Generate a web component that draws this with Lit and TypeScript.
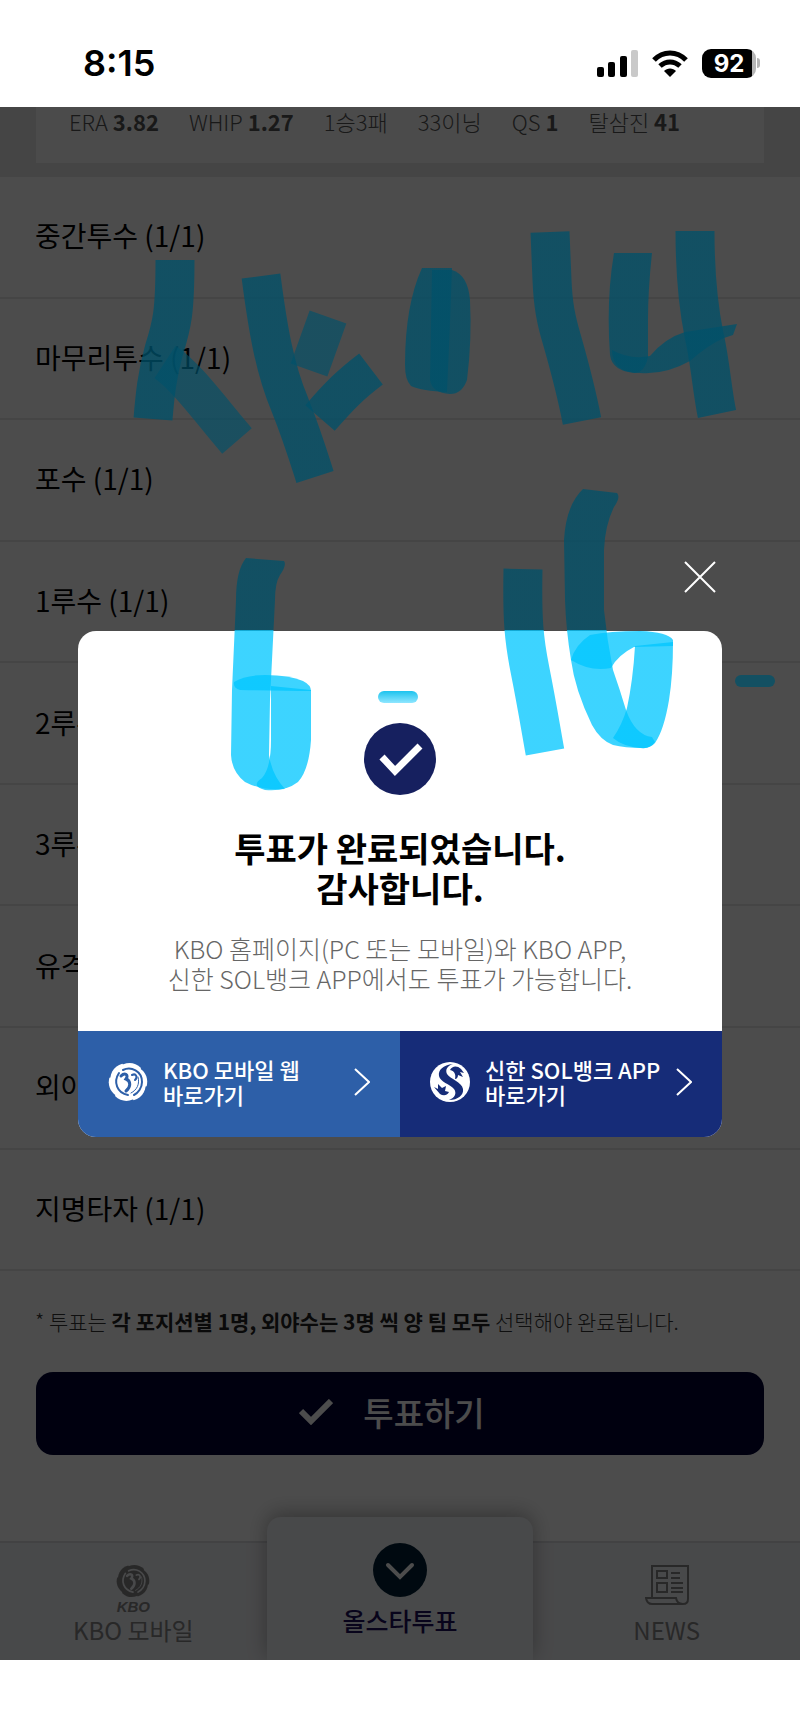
import { LitElement, html, svg, css, nothing } from 'lit';
import { customElement, property } from 'lit/decorators.js';

interface Stat {
  label: string;
  value?: string;
}

interface Position {
  name: string;
  picked: number;
  total: number;
}

const STATS: Stat[] = [
  { label: 'ERA', value: '3.82' },
  { label: 'WHIP', value: '1.27' },
  { label: '1승3패' },
  { label: '33이닝' },
  { label: 'QS', value: '1' },
  { label: '탈삼진', value: '41' },
];

const POSITIONS: Position[] = [
  { name: '중간투수', picked: 1, total: 1 },
  { name: '마무리투수', picked: 1, total: 1 },
  { name: '포수', picked: 1, total: 1 },
  { name: '1루수', picked: 1, total: 1 },
  { name: '2루수', picked: 1, total: 1 },
  { name: '3루수', picked: 1, total: 1 },
  { name: '유격수', picked: 1, total: 1 },
  { name: '외야수', picked: 3, total: 3 },
  { name: '지명타자', picked: 1, total: 1 },
];

// one feather tip on the rim of the emblem
const feather = (angle: number) => svg`
  <path transform="rotate(${angle} 20 20)" d="M10 6 C16 0 26 -1 33 6 L31 11 L14 12Z"/>`;

const kboMark = html`
  <svg class="mark" viewBox="0 0 40 40" aria-hidden="true">
    <mask id="swirl">
      <g fill="#fff">
        <circle cx="20" cy="20" r="17"/>
        ${[0, 60, 120, 180, 240, 300].map(feather)}
      </g>
      <g fill="none" stroke="#000" stroke-linecap="round">
        <path d="M11 11 C5 20 9 31 20 33" stroke-width="2"/>
        <path d="M15 8 C23 4 34 9 34 20 C34 26 30 31 26 33" stroke-width="2"/>
        <path d="M13 14 C17 10 21 13 18 17 C23 19 23 25 18 29" stroke-width="3"/>
        <path d="M24 13 C28 11 30 15 27 18" stroke-width="2"/>
        <path d="M30 15 C32 22 29 28 23 31" stroke-width="1"/>
      </g>
    </mask>
    <rect width="40" height="40" fill="currentColor" mask="url(#swirl)"/>
  </svg>
`;

const solMark = html`
  <svg class="mark" viewBox="0 0 40 40" aria-hidden="true">
    <circle cx="20" cy="20" r="20" fill="#fff"/>
    <g fill="#162c78">
      <path d="M23 2 C13 3 8 8 9 14 C10 20 20 22 24 27 C27 31 25 36 19 38 C28 38 34 33 33 27 C32 20 20 17 17 12 C15 8 17 4 23 2Z"/>
      <path d="M20 8 C22 4 27 3 31 7 L34 11 L30 10 L33 15 L28 13 C28 15 27 17 25 17 C26 13 25 9 20 8Z"/>
      <path d="M4 25 L8 27 L8 22 L12 26 L16 24 L15 29 L19 30 C17 34 13 34 10 32Z"/>
    </g>
  </svg>
`;

const chevron = html`
  <svg class="chevron" viewBox="0 0 16 28" fill="none" stroke="#fff" stroke-width="2" aria-hidden="true">
    <path d="M1 1 L15 14 L1 27"/>
  </svg>
`;

/**
 * Phone status bar: clock, signal, wifi and battery.
 *
 * @element status-bar
 */
@customElement('status-bar')
export class StatusBar extends LitElement {
  @property({ type: String })
  time = '';

  @property({ type: Number })
  battery = 100;

  static styles = css`
    :host {
      display: flex;
      justify-content: space-between;
      align-items: center;
      box-sizing: border-box;
      height: 107px;
      padding: 19px 40px 0 83px;
      background: #fff;
      color: #000;
      font-family: Inter, "Liberation Sans", sans-serif;
      font-weight: 600;
    }

    .time {
      font-size: 36px;
    }

    .icons {
      display: flex;
      align-items: center;
      gap: 14px;
    }

    .signal {
      width: 41px;
      height: 27px;
    }

    .wifi {
      width: 36px;
      height: 27px;
    }

    .battery {
      display: flex;
      align-items: center;
      gap: 1px;
    }

    .level {
      width: 54px;
      border-radius: 9px;
      background: linear-gradient(90deg, #000 92%, #b5b5b5 92%);
      color: #fff;
      font-size: 24px;
      font-weight: 700;
      line-height: 29px;
      text-align: center;
    }

    .cap {
      width: 3px;
      height: 10px;
      border-radius: 0 3px 3px 0;
      background: #b5b5b5;
    }
  `;

  render() {
    return html`
      <span class="time">${this.time}</span>
      <div class="icons">
        <svg class="signal" viewBox="0 0 41 27" aria-hidden="true">
          <rect x="0" y="17" width="7" height="10" rx="2"/>
          <rect x="11" y="12" width="7" height="15" rx="2"/>
          <rect x="23" y="6" width="7" height="21" rx="2"/>
          <rect x="34" y="0" width="7" height="27" rx="2" fill="#c9c9c9"/>
        </svg>
        <svg class="wifi" viewBox="0 0 36 27" fill="none" stroke="#000" stroke-width="5" aria-hidden="true">
          <path d="M2 10 C11 0.500 25 0.500 34 10"/>
          <path d="M8 16 C14 10.500 22 10.500 28 16"/>
          <path d="M18 27 L12 21 C15 17.500 21 17.500 24 21Z" fill="#000" stroke="none"/>
        </svg>
        <div class="battery">
          <span class="level">${this.battery}</span>
          <span class="cap"></span>
        </div>
      </div>
    `;
  }
}

/**
 * Popup shown once the ballot has been sent.
 *
 * @element vote-dialog
 */
@customElement('vote-dialog')
export class VoteDialog extends LitElement {
  static styles = css`
    :host {
      display: block;
      position: relative;
    }

    .dialog {
      border-radius: 18px;
      overflow: hidden;
      background: #fff;
      text-align: center;
    }

    .close {
      position: absolute;
      right: 0;
      bottom: 100%;
      width: 44px;
      height: 44px;
      margin-bottom: 32px;
      padding: 0;
      border: 0;
      background: none;
    }

    .close svg {
      width: 32px;
      height: 32px;
      display: block;
      margin: auto;
    }

    .body {
      display: flex;
      flex-direction: column;
      align-items: center;
      padding: 92px 24px 38px;
    }

    .badge {
      width: 72px;
      height: 72px;
    }

    h1 {
      margin: 33px 0 25px;
      color: #000;
      font-size: 34px;
      font-weight: 700;
      line-height: 40px;
    }

    p {
      margin: 0;
      color: #666;
      font-size: 25px;
      font-weight: 300;
      line-height: 30px;
    }

    .links {
      display: grid;
      grid-template-columns: 1fr 1fr;
    }

    .link {
      display: flex;
      align-items: center;
      gap: 15px;
      height: 106px;
      padding: 0 30px 4px;
      box-sizing: border-box;
      background: #2d5fa8;
      color: #fff;
      font-size: 22px;
      font-weight: 500;
      line-height: 25px;
      text-align: left;
      text-decoration: none;
      white-space: nowrap;
    }

    .link.sol {
      background: #162c78;
    }

    .link span {
      flex: 1;
    }

    .mark {
      width: 40px;
      height: 40px;
      flex: none;
    }

    .chevron {
      width: 16px;
      height: 28px;
      flex: none;
    }
  `;

  render() {
    return html`
      <button class="close" aria-label="닫기">
        <svg viewBox="0 0 32 32" stroke="#fff" stroke-width="2" aria-hidden="true">
          <path d="M1 1 L31 31 M31 1 L1 31"/>
        </svg>
      </button>
      <div class="dialog" role="dialog" aria-labelledby="title">
        <div class="body">
          <svg class="badge" viewBox="0 0 72 72" aria-hidden="true">
            <circle cx="36" cy="36" r="36" fill="#16205f"/>
            <path d="M18 34 L31 48 L56 23" fill="none" stroke="#fff" stroke-width="7"/>
          </svg>
          <h1 id="title">투표가 완료되었습니다.<br>감사합니다.</h1>
          <p>KBO 홈페이지(PC 또는 모바일)와 KBO APP,<br>신한 SOL뱅크 APP에서도 투표가 가능합니다.</p>
        </div>
        <div class="links">
          <a class="link" href="#kbo">${kboMark}<span>KBO 모바일 웹<br>바로가기</span>${chevron}</a>
          <a class="link sol" href="#sol">${solMark}<span>신한 SOL뱅크 APP<br>바로가기</span>${chevron}</a>
        </div>
      </div>
    `;
  }
}

/**
 * Highlighter strokes drawn by hand over the whole screen.
 * The ink is deep over the dimmed page and bright over the popup.
 *
 * @element ink-layer
 */
@customElement('ink-layer')
export class InkLayer extends LitElement {
  static styles = css`
    :host {
      display: block;
      pointer-events: none;
    }

    svg {
      display: block;
      width: 100%;
      height: 100%;
    }

    .line {
      fill: none;
      stroke: url(#ink);
      stroke-width: 39;
      stroke-opacity: 0.76;
    }

    .shape {
      fill: url(#ink);
      fill-opacity: 0.76;
    }

    .soft {
      stroke-opacity: 0.65;
    }

    .deep {
      fill: #00516a;
      fill-opacity: 0.75;
    }
  `;

  render() {
    return html`
      <svg viewBox="0 0 800 1733" aria-hidden="true">
        <defs>
          <linearGradient id="ink" gradientUnits="userSpaceOnUse" x1="0" y1="0" x2="0" y2="1000">
            <stop offset="0.6305" stop-color="#00516a"/>
            <stop offset="0.6305" stop-color="#00c6ff"/>
          </linearGradient>
          <linearGradient id="fade" x1="0" y1="0" x2="0" y2="1">
            <stop offset="0" stop-color="#1cc3ee"/>
            <stop offset="1" stop-color="#8fe6ff"/>
          </linearGradient>
        </defs>
        <path class="line" d="M175 260 C175 312 172 325 164 350 C157 375 155 395 153 419"/>
        <path class="line soft" d="M165 362 C185 375 212 412 237 441"/>
        <path class="line" d="M261 276 C268 330 275 370 290 405 C302 435 308 455 315 477"/>
        <path class="line soft" d="M328 317 L309 370"/>
        <path class="line" d="M371 369 C350 385 340 395 320 418"/>
        <path class="shape" d="M422 268 L452 268 Q450 330 447 392 Q422 391 411 386 Q405 380 405 365 Q405 305 422 268Z"/>
        <path class="shape" d="M432 270 L452 270 Q468 275 470 300 Q472 340 467 380 Q462 394 450 394 Q432 393 430 380Z"/>
        <path class="line" d="M550 232 L552 280 C553 305 556 320 562 340 C570 368 577 395 582 421"/>
        <path class="shape" d="M614 253 L652 253 Q648 290 648 320 L648 357 Q645 372 635 373 Q612 371 610 355 Q606 300 614 253Z"/>
        <path class="shape" d="M612 350 Q630 360 650 356 Q665 338 685 332 L737 324 L733 335 L724 338 Q708 345 690 361 Q665 375 640 373 Q612 373 612 350Z"/>
        <path class="line" d="M695 231 C695 280 699 310 704 335 C710 360 712 390 717 414"/>
        <path class="line" d="M523 569 C522 620 524 640 530 670 C537 705 541 730 545 752"/>
        <path class="shape" d="M246 558 L284 561 Q287 565 280 575 Q275 583 275 600 L270 700 L269 755 Q272 775 285 789 Q262 791 245 782 Q232 772 231 755 L232 690 L236 600 Q236 570 246 558Z"/>
        <path class="shape" d="M271 686 L311 690 V740 Q309 770 298 782 Q285 792 265 790 Q250 786 262 778 Q271 768 271 740Z"/>
        <path class="shape" d="M234 682 Q245 675 265 675 Q290 675 303 681 Q311 685 311 691 Q285 691 240 690 Q233 688 234 682Z"/>
        <path class="shape" d="M583 489 L617 493 Q621 497 614 507 Q605 525 604 550 L604 610 Q607 640 613 670 Q620 690 626 710 Q635 735 652 737 L655 742 Q650 749 642 748 Q625 748 613 745 Q600 740 592 725 Q575 690 571 660 Q566 630 565 600 L564 540 Q566 505 583 489Z"/>
        <path class="shape" d="M635 646 L673 642 Q673 675 669 700 Q664 730 655 743 Q650 749 640 748 Q622 746 613 738 Q622 725 627 708 Q633 680 635 646Z"/>
        <path class="shape" d="M571 660 Q575 645 590 635 Q610 631 640 631 Q668 632 673 640 V646 L634 647 Q618 655 611 668 Q590 672 571 660Z"/>
        <rect x="378" y="691" width="40" height="12" rx="6" fill="url(#fade)"/>
        <rect class="deep" x="735" y="675" width="40" height="12" rx="6"/>
      </svg>
    `;
  }
}

/**
 * All-star ballot page with the vote confirmation open on top.
 *
 * @element app-root
 */
@customElement('app-root')
export class AppRoot extends LitElement {
  static styles = css`
    :host {
      display: flex;
      flex-direction: column;
      position: relative;
      min-height: 100vh;
      background: #fff;
      font-family: "Noto Sans CJK KR", "Noto Sans", sans-serif;
    }

    .screen {
      flex: 1;
      display: flex;
      flex-direction: column;
      position: relative;
    }

    .player {
      padding: 0 36px 14px;
      background: #e6e6e6;
    }

    .stats {
      display: flex;
      gap: 30px;
      margin: 0;
      padding: 0 33px 28px;
      background: #fbfbfb;
      color: #555;
      font-size: 22px;
      font-weight: 300;
      line-height: 28px;
      white-space: nowrap;
    }

    .stats li {
      list-style: none;
    }

    b {
      font-weight: 700;
    }

    .positions {
      flex: 1;
      display: flex;
      flex-direction: column;
      margin: 0;
      padding: 0;
    }

    .position {
      flex: 1;
      display: flex;
      align-items: center;
      padding: 0 35px 3px;
      border-bottom: 2px solid #e6e6e6;
      color: #000;
      font-size: 28px;
      list-style: none;
    }

    .note {
      margin: 0;
      padding: 35px 35px 36px;
      color: #333;
      font-size: 21px;
      font-weight: 300;
      line-height: 30px;
      white-space: nowrap;
    }

    .note b {
      color: #222;
    }

    .vote {
      display: flex;
      align-items: center;
      justify-content: center;
      gap: 30px;
      height: 83px;
      margin: 0 36px 86px;
      padding: 0 16px 4px 0;
      border: 0;
      border-radius: 17px;
      background: #000335;
      color: #fff;
      font-family: inherit;
      font-size: 33px;
      font-weight: 500;
    }

    .vote svg {
      width: 34px;
      height: 26px;
    }

    .tabs {
      display: grid;
      grid-template-columns: repeat(3, 1fr);
      height: 119px;
      background: #f2f3f7;
      box-shadow: inset 0 2px #dcdde2;
    }

    .tab {
      display: flex;
      flex-direction: column;
      align-items: center;
      padding-top: 23px;
      color: #888;
      font-size: 24px;
      line-height: 30px;
      text-decoration: none;
    }

    .tab .mark {
      width: 34px;
      height: 34px;
    }

    .brand {
      font-family: "Liberation Sans", sans-serif;
      font-size: 15px;
      font-style: italic;
      font-weight: 700;
      line-height: 17px;
    }

    .news {
      width: 44px;
      height: 42px;
      margin-bottom: 9px;
    }

    .tab.active {
      margin-top: -24px;
      padding-top: 26px;
      border-radius: 14px 14px 0 0;
      background: #f2f3f7;
      box-shadow: 0 -4px 20px rgba(0, 0, 0, 0.3);
      clip-path: inset(-40px -40px 0);
      color: #1b0f5c;
      font-size: 25px;
      font-weight: 500;
    }

    .active svg {
      width: 54px;
      height: 54px;
      margin-bottom: 8px;
    }

    .dim,
    .popup {
      position: absolute;
      inset: 0;
    }

    .dim {
      background: rgba(0, 0, 0, 0.7);
    }

    .popup {
      display: flex;
      align-items: center;
      justify-content: center;
    }

    vote-dialog {
      width: 80.5%;
    }

    ink-layer {
      position: absolute;
      inset: 0;
    }

    .home {
      height: 73px;
    }
  `;

  private renderStat(stat: Stat) {
    return html`<li>${stat.label}${stat.value ? html` <b>${stat.value}</b>` : nothing}</li>`;
  }

  private renderPosition(position: Position) {
    return html`<li class="position">${position.name} (${position.picked}/${position.total})</li>`;
  }

  render() {
    return html`
      <status-bar time="8:15" battery="92"></status-bar>
      <main class="screen">
        <div class="player">
          <ul class="stats">${STATS.map(this.renderStat)}</ul>
        </div>
        <ul class="positions">${POSITIONS.map(this.renderPosition)}</ul>
        <p class="note">
          * 투표는 <b>각 포지션별 1명, 외야수는 3명 씩 양 팀 모두</b> 선택해야 완료됩니다.
        </p>
        <button class="vote">
          <svg viewBox="0 0 34 26" fill="none" stroke="currentColor" stroke-width="6" aria-hidden="true">
            <path d="M2 12 L12 22 L32 2"/>
          </svg>
          투표하기
        </button>
        <nav class="tabs">
          <a class="tab" href="#kbo">
            ${kboMark}
            <span class="brand">KBO</span>
            <span>KBO 모바일</span>
          </a>
          <a class="tab active" href="#vote">
            <svg viewBox="0 0 54 54" aria-hidden="true">
              <circle cx="27" cy="27" r="27" fill="#002136"/>
              <path d="M15 22 L27 34 L39 22" fill="none" stroke="#fff" stroke-width="4" stroke-linecap="round"/>
            </svg>
            <span>올스타투표</span>
          </a>
          <a class="tab" href="#news">
            <svg class="news" viewBox="0 0 44 42" fill="none" stroke="currentColor" stroke-width="2" aria-hidden="true">
              <path d="M7 34 V2 H43 V35 Q43 40 38 40 H7 Q2 40 1 34 H31 Q32 40 38 40"/>
              <path d="M12 7 H22 V14 H12Z M12 19 H22 V28 H12Z M26 9 H35 M26 14 H35 M26 19 H38 M26 24 H38 M26 28 H38"/>
            </svg>
            <span>NEWS</span>
          </a>
        </nav>
        <div class="dim"></div>
        <div class="popup">
          <vote-dialog></vote-dialog>
        </div>
      </main>
      <div class="home"></div>
      <ink-layer></ink-layer>
    `;
  }
}

declare global {
  interface HTMLElementTagNameMap {
    'app-root': AppRoot;
    'status-bar': StatusBar;
    'vote-dialog': VoteDialog;
    'ink-layer': InkLayer;
  }
}
